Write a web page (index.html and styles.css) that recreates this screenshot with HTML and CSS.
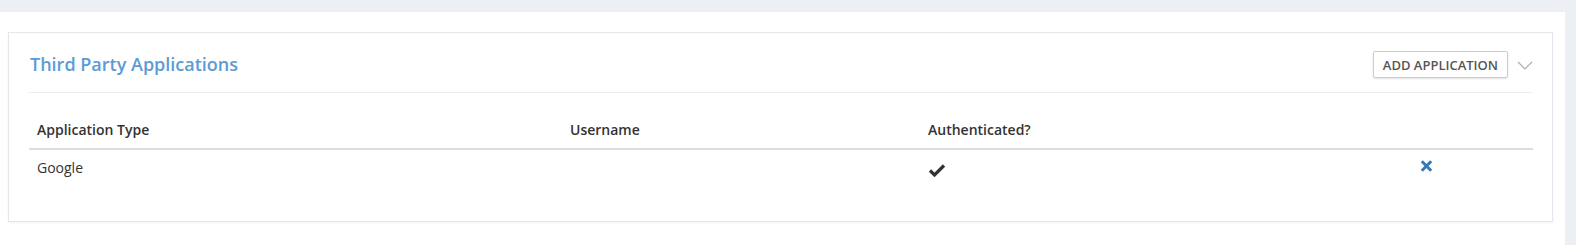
FILE: index.html
```html
<!DOCTYPE html>
<html>
<head>
<meta charset="utf-8">
<link rel="stylesheet" href="styles.css">
</head>
<body>
<div class="page">
  <section class="card">
    <header class="card-header">
      <h2 class="card-title">Third Party Applications</h2>
      <div class="card-tools">
        <button class="btn">Add Application</button>
        <svg class="chevron" width="16" height="9" viewBox="0 0 16 9"><path d="M1 1 L8 8 L15 1" fill="none" stroke="#a8adb3" stroke-width="1.2"/></svg>
      </div>
    </header>
    <table class="apps">
      <thead>
        <tr>
          <th class="c1">Application Type</th>
          <th class="c2">Username</th>
          <th class="c3">Authenticated?</th>
          <th class="c4"></th>
        </tr>
      </thead>
      <tbody>
        <tr>
          <td>Google</td>
          <td></td>
          <td><svg class="check" width="18" height="14" viewBox="0 0 18 14"><path d="M2 7.5 L6.5 12 L16 2.5" fill="none" stroke="#333" stroke-width="3.2"/></svg></td>
          <td class="act"><svg class="del" width="13" height="12" viewBox="0 0 13 12"><path d="M1.8 1.3 L11.2 10.7 M11.2 1.3 L1.8 10.7" fill="none" stroke="#337ab7" stroke-width="3"/></svg></td>
        </tr>
      </tbody>
    </table>
  </section>
</div>
</body>
</html>
```
FILE: styles.css
```css
html, body {
  margin: 0;
  padding: 0;
}
body {
  background: #ecf0f5;
  font-family: "Open Sans", "Liberation Sans", sans-serif;
  color: #333;
  height: 245px;
  overflow: hidden;
}
.page {
  margin-top: 12px;
  margin-right: 11px;
  background: #fff;
  padding: 20px 12px 13px 8px;
  box-sizing: border-box;
  min-height: calc(100vh - 12px);
}
.card {
  background: #fff;
  border: 1px solid #e4e7eb;
  box-shadow: 0 1px 2px rgba(0,0,0,0.05);
  padding: 0 19px 36px 20px;
}
.card-header {
  display: flex;
  align-items: center;
  justify-content: space-between;
  height: 59px;
  border-bottom: 1px solid #eceef0;
}
.card-title {
  margin: 0;
  font-size: 18px;
  font-weight: 600;
  color: #5b9bd5;
  padding-left: 1px;
  position: relative;
  top: 1px;
}
.card-tools {
  display: flex;
  align-items: center;
  gap: 9px;
  margin-top: 4px;
}
.btn {
  font-family: "Open Sans", "Liberation Sans", sans-serif;
  font-size: 13px;
  font-weight: 600;
  text-transform: uppercase;
  color: #555;
  background: #fff;
  border: 1px solid #ccc;
  border-radius: 2px;
  box-shadow: 0 1px 2px rgba(0,0,0,0.12);
  height: 27px;
  padding: 0 9px;
  letter-spacing: 0;
}
.chevron {
  display: block;
  margin-top: 1px;
}
.apps {
  width: 100%;
  border-collapse: collapse;
  margin-top: 17px;
  table-layout: fixed;
}
.apps th {
  text-align: left;
  font-size: 14px;
  font-weight: 600;
  color: #333;
  padding: 8px 8px;
  height: 22px;
  border-bottom: 2px solid #ddd;
}
.apps td {
  font-size: 14px;
  padding: 8px 8px;
  height: 19px;
  vertical-align: top;
}
.c1 { width: 517px; }
.c2 { width: 342px; }
.c3 { width: 476px; }
.check {
  display: block;
  margin-top: 5px;
}
.del {
  display: block;
  margin-top: 2px;
}
```
